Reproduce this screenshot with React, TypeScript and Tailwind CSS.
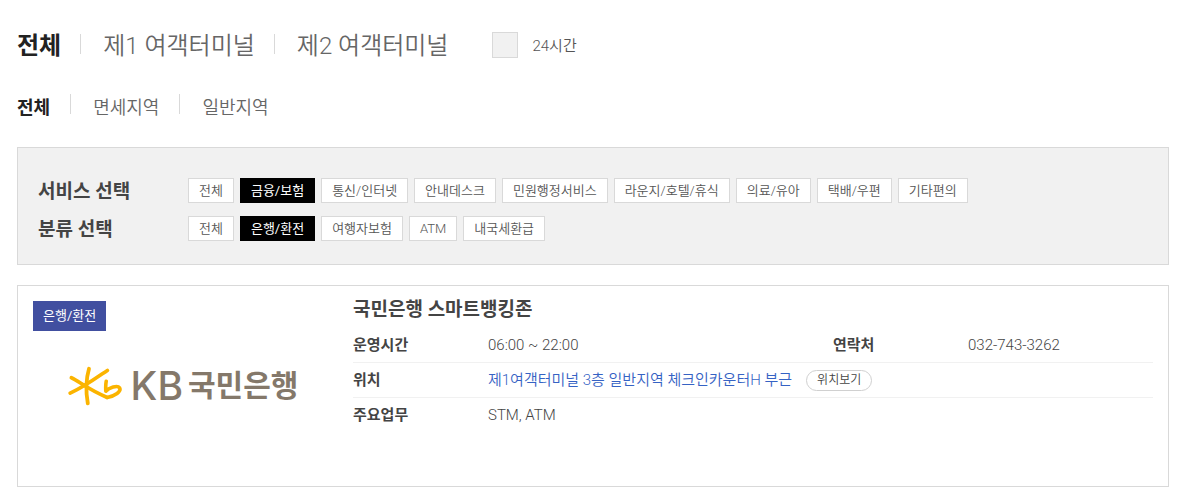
import { useState } from "react";
import clsx from "clsx";

const terminals = ["전체", "제1 여객터미널", "제2 여객터미널"];
const areas = ["전체", "면세지역", "일반지역"];
const services = [
  "전체",
  "금융/보험",
  "통신/인터넷",
  "안내데스크",
  "민원행정서비스",
  "라운지/호텔/휴식",
  "의료/유아",
  "택배/우편",
  "기타편의",
];
const categories = ["전체", "은행/환전", "여행자보험", "ATM", "내국세환급"];

function TabRow({ items, size }: { items: string[]; size: "lg" | "md" }) {
  const [active, setActive] = useState(items[0]);
  return (
    <ul className="flex items-center">
      {items.map((item, i) => (
        <li key={item} className="flex items-center">
          {i > 0 && (
            <span
              aria-hidden="true"
              className={clsx(
                "mr-[22px] h-5 w-px bg-[#d9d9d9]",
                size === "lg" ? "mb-1 ml-[19px]" : "mb-2 ml-5",
              )}
            />
          )}
          <button
            type="button"
            onClick={() => setActive(item)}
            className={clsx(
              "cursor-pointer",
              size === "lg" ? "text-[24px] leading-9" : "text-[18px] leading-7",
              item === active
                ? "font-bold text-[#222]"
                : "font-[350] text-[#666]",
            )}
          >
            {item}
          </button>
        </li>
      ))}
    </ul>
  );
}

function FilterRow({
  title,
  items,
  initial,
}: {
  title: string;
  items: string[];
  initial: string;
}) {
  const [active, setActive] = useState(initial);
  return (
    <div className="flex items-start">
      <h2 className="w-[150px] shrink-0 text-[19px] leading-[27px] font-bold text-[#444]">
        {title}
      </h2>
      <ul className="flex flex-wrap gap-[6px]">
        {items.map((item) => (
          <li key={item} className="flex">
            <button
              type="button"
              onClick={() => setActive(item)}
              className={clsx(
                "h-[25px] cursor-pointer border px-[10px] text-[13px] leading-[22px]",
                item === active
                  ? "border-black bg-black text-white"
                  : "border-[#d9d9d9] bg-white font-[350] text-[#555]",
              )}
            >
              {item}
            </button>
          </li>
        ))}
      </ul>
    </div>
  );
}

function BankLogo() {
  return (
    <div className="flex items-center text-[#84786a]">
      <svg viewBox="0 0 54 40" className="h-10 w-[54px]" fill="none" aria-hidden="true">
        <g stroke="#fbb400" strokeLinecap="round" strokeLinejoin="round">
          <path d="M21 2.8C18 13 17.8 26 19.8 37.4" strokeWidth="3.8" />
          <path d="M3.4 11.8C10 14.5 20 23.5 39.2 31.4" strokeWidth="3.8" />
          <path d="M39.4 4.4C31 10 17 20.5 2.2 27.2" strokeWidth="3.6" />
          <path
            d="M38.2 15.2C37.6 18.5 37.6 21.5 37.8 25.2C41 21.6 49.5 19 51.6 21.8C53.6 25.6 47 30 39.2 31.4"
            strokeWidth="3.6"
          />
        </g>
      </svg>
      <span className="ml-[9px] font-['Inter'] text-[39px] leading-10 font-medium">KB</span>
      <span className="ml-[5px] text-[30px] leading-10 font-bold">국민은행</span>
    </div>
  );
}

export default function App() {
  return (
    <main className="bg-white pt-7 pr-[9px] pb-[6px] pl-[17px] font-[Roboto,'Noto_Sans_CJK_KR',sans-serif]">
      <div className="flex items-center">
        <TabRow items={terminals} size="lg" />
        <label className="ml-11 flex cursor-pointer items-center gap-[14px] text-[15px] leading-9 font-[350] text-[#555]">
          <input
            type="checkbox"
            className="mb-[2px] size-[26px] appearance-none border border-[#d9d9d9] bg-[#f1f1f1] checked:bg-[#444]"
          />
          24시간
        </label>
      </div>

      <div className="mt-[30px]">
        <TabRow items={areas} size="md" />
      </div>

      <section className="mt-[25px] flex flex-col gap-[11px] border border-[#d9d9d9] bg-[#f1f1f1] px-5 pt-[30px] pb-[21px]">
        <FilterRow title="서비스 선택" items={services} initial="금융/보험" />
        <FilterRow title="분류 선택" items={categories} initial="은행/환전" />
      </section>

      <article className="mt-5 flex gap-5 border border-[#d9d9d9] px-[15px] pt-[15px] pb-10">
        <div className="flex w-[300px] shrink-0 flex-col">
          <span className="self-start bg-[#414fa0] px-[10px] text-[13px] leading-[30px] text-white">
            은행/환전
          </span>
          <div className="mt-[35px] flex justify-center pb-10">
            <BankLogo />
          </div>
        </div>

        <div className="min-w-0 flex-1">
          <h3 className="-mt-[5px] text-[19px] leading-7 font-bold text-[#444]">
            국민은행 스마트뱅킹존
          </h3>
          <table className="mt-1 w-full table-fixed text-left text-[15px] leading-[34px] text-[#444]">
            <colgroup>
              <col className="w-[135px]" />
              <col />
              <col className="w-[135px]" />
              <col className="w-[185px]" />
            </colgroup>
            <tbody>
              <tr className="border-b border-[#f1f1f1]">
                <th scope="row" className="font-bold">운영시간</th>
                <td className="font-[350]">06:00 ~ 22:00</td>
                <th scope="row" className="font-bold">연락처</th>
                <td className="font-[350]">032-743-3262</td>
              </tr>
              <tr className="border-b border-[#f1f1f1]">
                <th scope="row" className="font-bold">위치</th>
                <td colSpan={3} className="font-[350]">
                  <div className="flex items-center gap-[14px]">
                    <span className="text-[#3562c4]">
                      제1여객터미널 3층 일반지역 체크인카운터H 부근
                    </span>
                    <a
                      href="#map"
                      className="rounded-full border border-[#d0d0d0] px-[10px] text-[12px] leading-[19px] text-[#444]"
                    >
                      위치보기
                    </a>
                  </div>
                </td>
              </tr>
              <tr>
                <th scope="row" className="font-bold">주요업무</th>
                <td colSpan={3} className="font-[350]">STM, ATM</td>
              </tr>
            </tbody>
          </table>
        </div>
      </article>
    </main>
  );
}
